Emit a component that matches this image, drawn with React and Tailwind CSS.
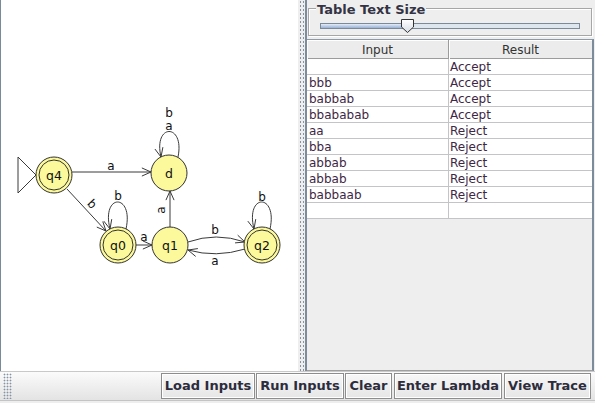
import React from 'react';

const rows = [
  ['', 'Accept'],
  ['bbb', 'Accept'],
  ['babbab', 'Accept'],
  ['bbababab', 'Accept'],
  ['aa', 'Reject'],
  ['bba', 'Reject'],
  ['abbab', 'Reject'],
  ['abbab', 'Reject'],
  ['babbaab', 'Reject'],
  ['', ''],
];

const buttons = [
  ['Load Inputs', 'w-[94px]'],
  ['Run Inputs', 'w-[88px]'],
  ['Clear', 'w-[47px]'],
  ['Enter Lambda', 'w-[108px] ml-[1px]'],
  ['View Trace', 'w-[87px] ml-[1px]'],
];

// open "V" arrow head at (x, y) pointing along (dx, dy)
function Head({ x, y, dx, dy }) {
  const a = Math.atan2(dy, dx);
  const len = 10;
  const s = 0.42;
  const p1 = [x - len * Math.cos(a - s), y - len * Math.sin(a - s)];
  const p2 = [x - len * Math.cos(a + s), y - len * Math.sin(a + s)];
  return <path d={`M${p1[0]},${p1[1]} L${x},${y} L${p2[0]},${p2[1]}`} fill="none" />;
}

function State({ cx, cy, label, final }) {
  return (
    <g>
      <circle cx={cx} cy={cy} r="18" fill="#fcf89c" stroke="#333" />
      {final && <circle cx={cx} cy={cy} r="15" fill="none" stroke="#333" />}
      <text x={cx} y={cy + 4.5} textAnchor="middle" fontSize="12.5" fill="#111" stroke="none">{label}</text>
    </g>
  );
}

function Graph() {
  return (
    <svg className="absolute left-0 top-0" width="297" height="371" viewBox="1 0 297 371">
      <g stroke="#3a3a3a" strokeWidth="1" fill="none">
        <path d="M18,157 L36,175 L18,193 Z" />
        {/* q4 -> d */}
        <line x1="72" y1="172" x2="151" y2="172" />
        <Head x={151} y={172} dx={1} dy={0} />
        {/* q4 -> q0 */}
        <line x1="67" y1="189" x2="106" y2="231" />
        <Head x={106} y={231} dx={39} dy={42} />
        {/* d loop */}
        <path d="M178,157 C185,123 153,123 161,157" />
        <Head x={161} y={157} dx={8} dy={34} />
        {/* q0 loop */}
        <path d="M126,229 C134,193 101,193 110,229" />
        <Head x={110} y={229} dx={9} dy={36} />
        {/* q0 -> q1 */}
        <line x1="136" y1="245" x2="152" y2="245" />
        <Head x={152} y={245} dx={1} dy={0} />
        {/* q1 -> d */}
        <line x1="170" y1="227" x2="170" y2="191" />
        <Head x={170} y={191} dx={0} dy={-1} />
        {/* q1 -> q2 */}
        <path d="M188,242 Q216,232 245,242" />
        <Head x={245} y={242} dx={29} dy={10} />
        {/* q2 -> q1 */}
        <path d="M245,249 Q216,258 188,250" />
        <Head x={188} y={250} dx={-28} dy={-8} />
        {/* q2 loop */}
        <path d="M270,229 C278,193 245,193 254,229" />
        <Head x={254} y={229} dx={9} dy={36} />
      </g>
      <g fontSize="12" fill="#111" textAnchor="middle">
        <text x="111" y="170">a</text>
        <text transform="translate(92,204) rotate(47)" y="4">b</text>
        <text x="169" y="130">a</text>
        <text x="169" y="117">b</text>
        <text x="118" y="200">b</text>
        <text x="144" y="241">a</text>
        <text transform="translate(161,210) rotate(-90)" y="4">a</text>
        <text x="215" y="234">b</text>
        <text x="215" y="265">a</text>
        <text x="262" y="201">b</text>
      </g>
      <State cx={54} cy={175} label="q4" final />
      <State cx={169} cy={173} label="d" />
      <State cx={118} cy={245} label="q0" final />
      <State cx={170} cy={245} label="q1" />
      <State cx={262} cy={245} label="q2" final />
    </svg>
  );
}

export default function App() {
  return (
    <div className="w-[595px] h-[403px] flex flex-col bg-[#eeeeee] overflow-hidden font-['DejaVu_Sans',sans-serif] text-[#333]">
      <div className="flex h-[371px]">
        <div className="relative w-[298px] h-full bg-white border-l border-[#7a8a9a]">
          <Graph />
        </div>
        <div className="w-[7px] h-full bg-[#eeeeee] bg-[radial-gradient(circle,#8494a6_0.8px,transparent_1.1px)] bg-[length:3px_4px] bg-[position:1px_0]" />
        <div className="flex-1 flex flex-col border-l-2 border-[#7d8c9c]">
          <div className="relative mt-[8px] ml-[1px] w-[284px] h-[28px] border border-[#a6a6a6] shadow-[inset_1px_1px_0_#fff,1px_1px_0_#fff]">
            <div className="absolute left-[7px] top-[-7px] bg-[#eeeeee] px-[1px] text-[13px] leading-[15px] font-bold text-[#333344]">
              Table Text Size
            </div>
            <div className="absolute left-[11px] top-[14px] w-[260px] h-[6px] border border-[#7a8a9a] bg-[#dde5ee] flex">
              <div className="w-[86px] h-full bg-gradient-to-b from-[#e4ecf7] to-[#98b1d6]" />
            </div>
            <svg className="absolute left-[91px] top-[9px]" width="16" height="16" viewBox="0 0 16 16">
              <defs>
                <linearGradient id="th" x1="0" y1="0" x2="0" y2="1">
                  <stop offset="0" stopColor="#ffffff" />
                  <stop offset="1" stopColor="#d6dde6" />
                </linearGradient>
              </defs>
              <path d="M1.5,1.5 H13.5 V9 L7.5,14.5 L1.5,9 Z" fill="url(#th)" stroke="#333" />
            </svg>
          </div>
          <div className="mt-[3px] w-[287px] flex-1 border-t border-[#8e9aa8] border-r-2 border-r-[#7d8c9c] border-b border-b-[#a0a0a0] bg-[#eeeeee] text-[12px]">
            <div className="grid grid-cols-[142px_1fr] h-[19px] bg-[#ececec] border-b border-[#9c9c9c]">
              <div className="border-r border-[#9c9c9c] text-center leading-[21px] shadow-[inset_1px_1px_0_#fff]">Input</div>
              <div className="text-center leading-[21px] shadow-[inset_1px_1px_0_#fff]">Result</div>
            </div>
            {rows.map((r, i) => (
              <div key={i} className="grid grid-cols-[142px_1fr] h-[16px] bg-white border-b border-[#c4c4c8] text-[#3e2744] leading-[17px]">
                <div className="border-r border-[#c4c4c8] pl-[2px]">{r[0]}</div>
                <div className="pl-[1px]">{r[1]}</div>
              </div>
            ))}
          </div>
        </div>
      </div>
      <div className="h-[32px] border-t border-[#c9c9c9] bg-gradient-to-b from-[#fbfbfb] to-[#e1e1e1] flex flex-col">
        <div className="flex items-start pt-[1px] pl-[3px] pr-[4px]">
          <div className="w-[9px] h-[26px] bg-[radial-gradient(circle,#8494a6_0.8px,transparent_1.1px)] bg-[length:3px_3px]" />
          <div className="ml-auto flex gap-[1px]">
            {buttons.map(([label, w]) => (
              <div
                key={label}
                className={`${w} h-[26px] border border-[#8d8d8d] shadow-[inset_1px_1px_0_#fff,inset_-1px_-1px_0_#fff] bg-gradient-to-b from-[#f7f7f7] to-[#e6e6e6] flex items-center justify-center text-[13px] font-bold text-[#2c2c3c]`}
              >
                {label}
              </div>
            ))}
          </div>
        </div>
        <div className="mt-auto h-[3px] border-t border-[#c4c4c4] bg-[#eeeeee]" />
      </div>
    </div>
  );
}
